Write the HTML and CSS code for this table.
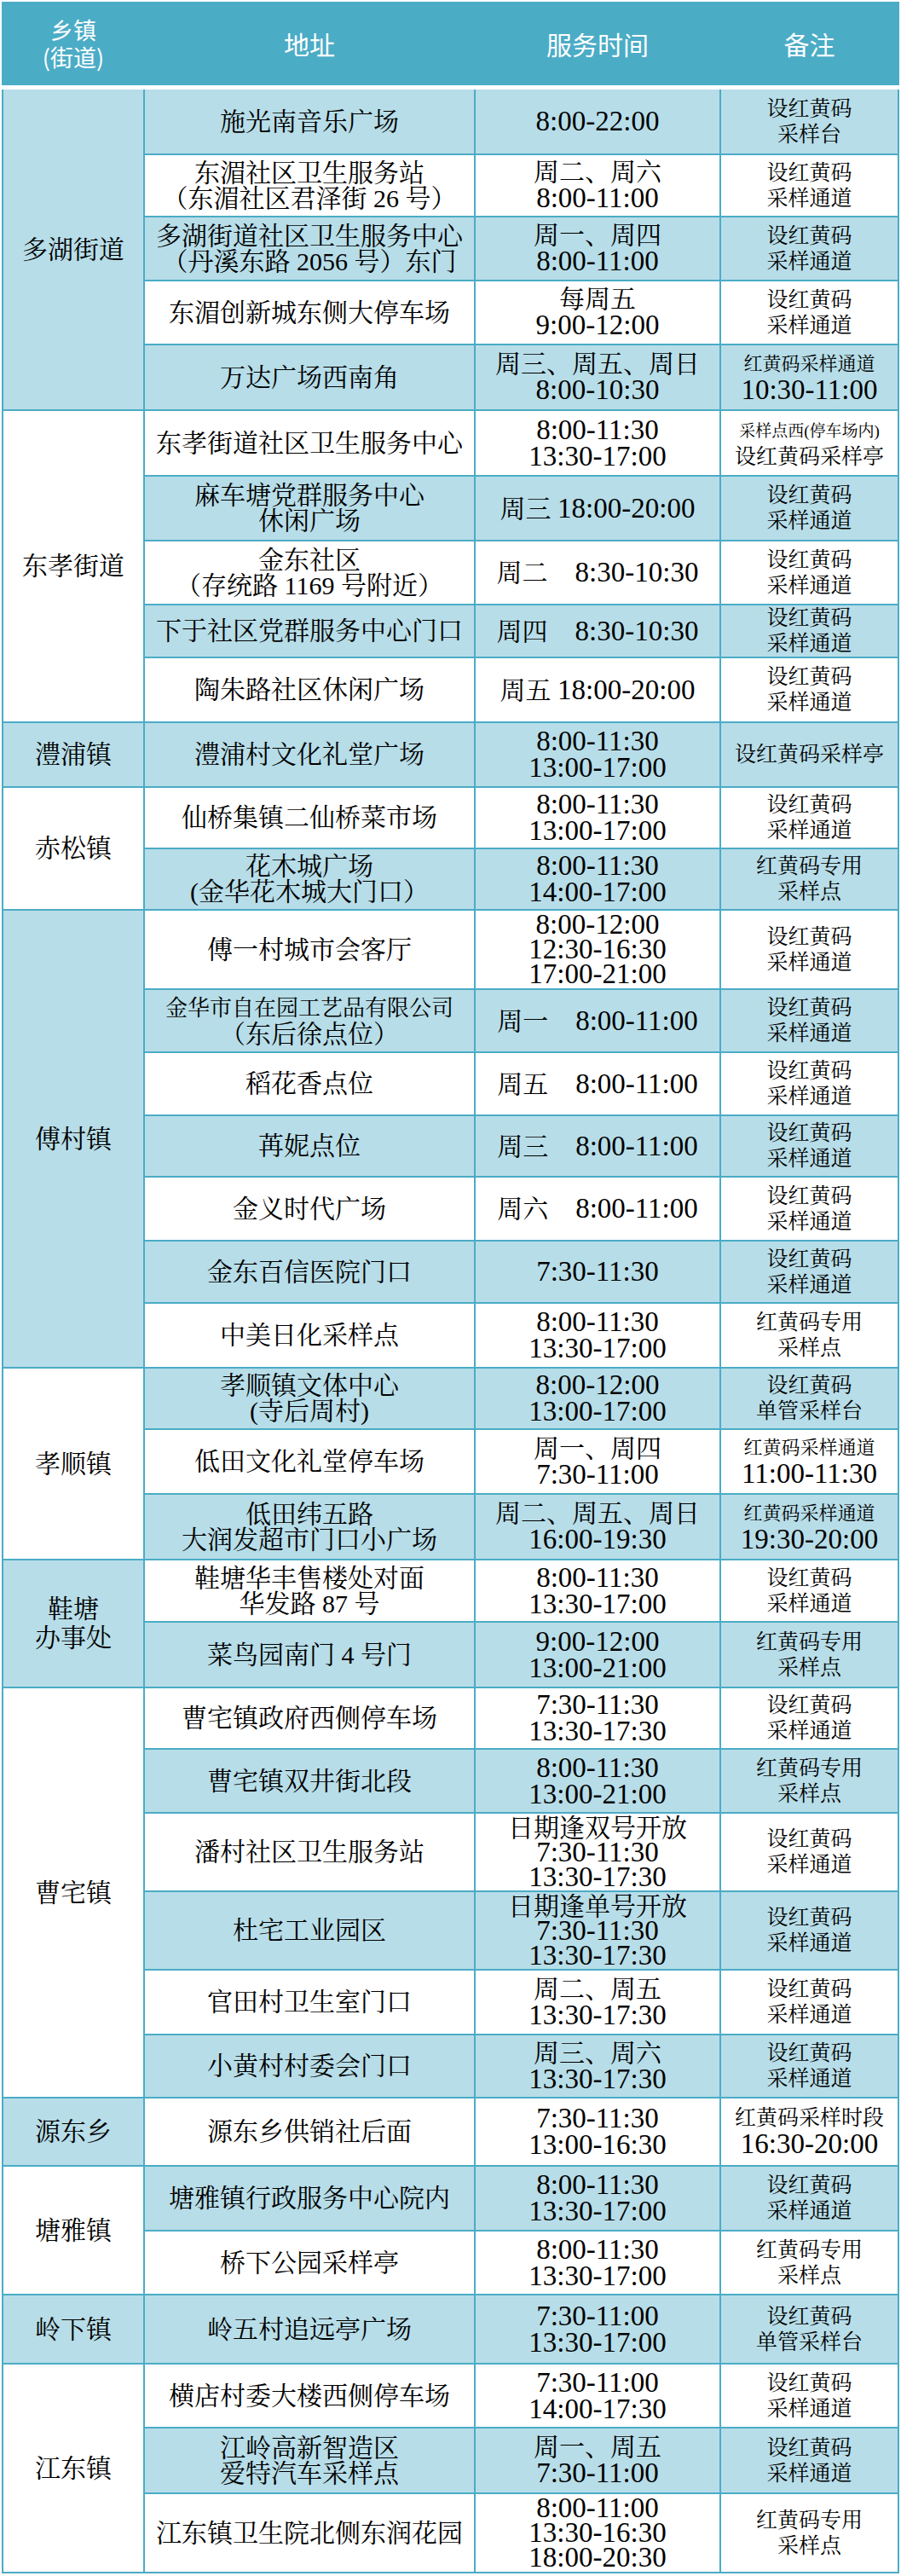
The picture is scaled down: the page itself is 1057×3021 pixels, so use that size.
FILE: index.html
```html
<!DOCTYPE html>
<html lang="zh-CN">
<head>
<meta charset="utf-8">
<title>核酸采样点</title>
<link rel="stylesheet" href="styles.css">
</head>
<body>
<div class="sheet">
  <div class="head">
    <div class="hc town"><p>乡镇<br>(街道)</p></div>
    <div class="hc"><p>地址</p></div>
    <div class="hc"><p>服务时间</p></div>
    <div class="hc"><p>备注</p></div>
  </div>
  <div class="grid">
    <!-- 多湖街道 -->
    <div class="c g b s5"><p>多湖街道</p></div>
    <div class="c a b"><p>施光南音乐广场</p></div>
    <div class="c t b"><p><span class="n">8:00-22:00</span></p></div>
    <div class="c m b"><p>设红黄码<br>采样台</p></div>

    <div class="c a w"><p>东湄社区卫生服务站<br>（东湄社区君泽街 26 号）</p></div>
    <div class="c t w"><p>周二、周六<br><span class="n">8:00-11:00</span></p></div>
    <div class="c m w"><p>设红黄码<br>采样通道</p></div>

    <div class="c a b"><p>多湖街道社区卫生服务中心<br>（丹溪东路 2056 号）东门</p></div>
    <div class="c t b"><p>周一、周四<br><span class="n">8:00-11:00</span></p></div>
    <div class="c m b"><p>设红黄码<br>采样通道</p></div>

    <div class="c a w"><p>东湄创新城东侧大停车场</p></div>
    <div class="c t w"><p>每周五<br><span class="n">9:00-12:00</span></p></div>
    <div class="c m w"><p>设红黄码<br>采样通道</p></div>

    <div class="c a b"><p>万达广场西南角</p></div>
    <div class="c t b"><p>周三、周五、周日<br><span class="n">8:00-10:30</span></p></div>
    <div class="c m b"><p><span class="sm">红黄码采样通道</span><br><span class="n">10:30-11:00</span></p></div>

    <!-- 东孝街道 -->
    <div class="c g w s5"><p>东孝街道</p></div>
    <div class="c a w"><p>东孝街道社区卫生服务中心</p></div>
    <div class="c t w"><p><span class="n">8:00-11:30</span><br><span class="n">13:30-17:00</span></p></div>
    <div class="c m w"><p><span class="xs">采样点西(停车场内)</span><br>设红黄码采样亭</p></div>

    <div class="c a b"><p>麻车塘党群服务中心<br>休闲广场</p></div>
    <div class="c t b"><p>周三 <span class="n">18:00-20:00</span></p></div>
    <div class="c m b"><p>设红黄码<br>采样通道</p></div>

    <div class="c a w"><p>金东社区<br>（存统路 1169 号附近）</p></div>
    <div class="c t w"><p>周二<span class="sp"></span><span class="n">8:30-10:30</span></p></div>
    <div class="c m w"><p>设红黄码<br>采样通道</p></div>

    <div class="c a b"><p>下于社区党群服务中心门口</p></div>
    <div class="c t b"><p>周四<span class="sp"></span><span class="n">8:30-10:30</span></p></div>
    <div class="c m b"><p>设红黄码<br>采样通道</p></div>

    <div class="c a w"><p>陶朱路社区休闲广场</p></div>
    <div class="c t w"><p>周五 <span class="n">18:00-20:00</span></p></div>
    <div class="c m w"><p>设红黄码<br>采样通道</p></div>

    <!-- 澧浦镇 -->
    <div class="c g b"><p>澧浦镇</p></div>
    <div class="c a b"><p>澧浦村文化礼堂广场</p></div>
    <div class="c t b"><p><span class="n">8:00-11:30</span><br><span class="n">13:00-17:00</span></p></div>
    <div class="c m b"><p>设红黄码采样亭</p></div>

    <!-- 赤松镇 -->
    <div class="c g w s2"><p>赤松镇</p></div>
    <div class="c a w"><p>仙桥集镇二仙桥菜市场</p></div>
    <div class="c t w"><p><span class="n">8:00-11:30</span><br><span class="n">13:00-17:00</span></p></div>
    <div class="c m w"><p>设红黄码<br>采样通道</p></div>

    <div class="c a b"><p>花木城广场<br>(金华花木城大门口）</p></div>
    <div class="c t b"><p><span class="n">8:00-11:30</span><br><span class="n">14:00-17:00</span></p></div>
    <div class="c m b"><p>红黄码专用<br>采样点</p></div>

    <!-- 傅村镇 -->
    <div class="c g b s7"><p>傅村镇</p></div>
    <div class="c a w"><p>傅一村城市会客厅</p></div>
    <div class="c t w three"><p><span class="n">8:00-12:00</span><br><span class="n">12:30-16:30</span><br><span class="n">17:00-21:00</span></p></div>
    <div class="c m w"><p>设红黄码<br>采样通道</p></div>

    <div class="c a b"><p><span class="nar">金华市自在园工艺品有限公司</span><br>（东后徐点位）</p></div>
    <div class="c t b"><p>周一<span class="sp"></span><span class="n">8:00-11:00</span></p></div>
    <div class="c m b"><p>设红黄码<br>采样通道</p></div>

    <div class="c a w"><p>稻花香点位</p></div>
    <div class="c t w"><p>周五<span class="sp"></span><span class="n">8:00-11:00</span></p></div>
    <div class="c m w"><p>设红黄码<br>采样通道</p></div>

    <div class="c a b"><p>苒妮点位</p></div>
    <div class="c t b"><p>周三<span class="sp"></span><span class="n">8:00-11:00</span></p></div>
    <div class="c m b"><p>设红黄码<br>采样通道</p></div>

    <div class="c a w"><p>金义时代广场</p></div>
    <div class="c t w"><p>周六<span class="sp"></span><span class="n">8:00-11:00</span></p></div>
    <div class="c m w"><p>设红黄码<br>采样通道</p></div>

    <div class="c a b"><p>金东百信医院门口</p></div>
    <div class="c t b"><p><span class="n">7:30-11:30</span></p></div>
    <div class="c m b"><p>设红黄码<br>采样通道</p></div>

    <div class="c a w"><p>中美日化采样点</p></div>
    <div class="c t w"><p><span class="n">8:00-11:30</span><br><span class="n">13:30-17:00</span></p></div>
    <div class="c m w"><p>红黄码专用<br>采样点</p></div>

    <!-- 孝顺镇 -->
    <div class="c g w s3"><p>孝顺镇</p></div>
    <div class="c a b"><p>孝顺镇文体中心<br>(寺后周村)</p></div>
    <div class="c t b"><p><span class="n">8:00-12:00</span><br><span class="n">13:00-17:00</span></p></div>
    <div class="c m b"><p>设红黄码<br>单管采样台</p></div>

    <div class="c a w"><p>低田文化礼堂停车场</p></div>
    <div class="c t w"><p>周一、周四<br><span class="n">7:30-11:00</span></p></div>
    <div class="c m w"><p><span class="sm">红黄码采样通道</span><br><span class="n">11:00-11:30</span></p></div>

    <div class="c a b"><p>低田纬五路<br>大润发超市门口小广场</p></div>
    <div class="c t b"><p>周二、周五、周日<br><span class="n">16:00-19:30</span></p></div>
    <div class="c m b"><p><span class="sm">红黄码采样通道</span><br><span class="n">19:30-20:00</span></p></div>

    <!-- 鞋塘办事处 -->
    <div class="c g b s2"><p>鞋塘<br>办事处</p></div>
    <div class="c a w"><p>鞋塘华丰售楼处对面<br>华发路 87 号</p></div>
    <div class="c t w"><p><span class="n">8:00-11:30</span><br><span class="n">13:30-17:00</span></p></div>
    <div class="c m w"><p>设红黄码<br>采样通道</p></div>

    <div class="c a b"><p>菜鸟园南门 4 号门</p></div>
    <div class="c t b"><p><span class="n">9:00-12:00</span><br><span class="n">13:00-21:00</span></p></div>
    <div class="c m b"><p>红黄码专用<br>采样点</p></div>

    <!-- 曹宅镇 -->
    <div class="c g w s6"><p>曹宅镇</p></div>
    <div class="c a w"><p>曹宅镇政府西侧停车场</p></div>
    <div class="c t w"><p><span class="n">7:30-11:30</span><br><span class="n">13:30-17:30</span></p></div>
    <div class="c m w"><p>设红黄码<br>采样通道</p></div>

    <div class="c a b"><p>曹宅镇双井街北段</p></div>
    <div class="c t b"><p><span class="n">8:00-11:30</span><br><span class="n">13:00-21:00</span></p></div>
    <div class="c m b"><p>红黄码专用<br>采样点</p></div>

    <div class="c a w"><p>潘村社区卫生服务站</p></div>
    <div class="c t w three"><p>日期逢双号开放<br><span class="n">7:30-11:30</span><br><span class="n">13:30-17:30</span></p></div>
    <div class="c m w"><p>设红黄码<br>采样通道</p></div>

    <div class="c a b"><p>杜宅工业园区</p></div>
    <div class="c t b three"><p>日期逢单号开放<br><span class="n">7:30-11:30</span><br><span class="n">13:30-17:30</span></p></div>
    <div class="c m b"><p>设红黄码<br>采样通道</p></div>

    <div class="c a w"><p>官田村卫生室门口</p></div>
    <div class="c t w"><p>周二、周五<br><span class="n">13:30-17:30</span></p></div>
    <div class="c m w"><p>设红黄码<br>采样通道</p></div>

    <div class="c a b"><p>小黄村村委会门口</p></div>
    <div class="c t b"><p>周三、周六<br><span class="n">13:30-17:30</span></p></div>
    <div class="c m b"><p>设红黄码<br>采样通道</p></div>

    <!-- 源东乡 -->
    <div class="c g b"><p>源东乡</p></div>
    <div class="c a w"><p>源东乡供销社后面</p></div>
    <div class="c t w"><p><span class="n">7:30-11:30</span><br><span class="n">13:00-16:30</span></p></div>
    <div class="c m w"><p>红黄码采样时段<br><span class="n">16:30-20:00</span></p></div>

    <!-- 塘雅镇 -->
    <div class="c g w s2"><p>塘雅镇</p></div>
    <div class="c a b"><p>塘雅镇行政服务中心院内</p></div>
    <div class="c t b"><p><span class="n">8:00-11:30</span><br><span class="n">13:30-17:00</span></p></div>
    <div class="c m b"><p>设红黄码<br>采样通道</p></div>

    <div class="c a w"><p>桥下公园采样亭</p></div>
    <div class="c t w"><p><span class="n">8:00-11:30</span><br><span class="n">13:30-17:00</span></p></div>
    <div class="c m w"><p>红黄码专用<br>采样点</p></div>

    <!-- 岭下镇 -->
    <div class="c g b"><p>岭下镇</p></div>
    <div class="c a b"><p>岭五村追远亭广场</p></div>
    <div class="c t b"><p><span class="n">7:30-11:00</span><br><span class="n">13:30-17:00</span></p></div>
    <div class="c m b"><p>设红黄码<br>单管采样台</p></div>

    <!-- 江东镇 -->
    <div class="c g w s3"><p>江东镇</p></div>
    <div class="c a w"><p>横店村委大楼西侧停车场</p></div>
    <div class="c t w"><p><span class="n">7:30-11:00</span><br><span class="n">14:00-17:30</span></p></div>
    <div class="c m w"><p>设红黄码<br>采样通道</p></div>

    <div class="c a b"><p>江岭高新智造区<br>爱特汽车采样点</p></div>
    <div class="c t b"><p>周一、周五<br><span class="n">7:30-11:00</span></p></div>
    <div class="c m b"><p>设红黄码<br>采样通道</p></div>

    <div class="c a w"><p>江东镇卫生院北侧东润花园</p></div>
    <div class="c t w three"><p><span class="n">8:00-11:00</span><br><span class="n">13:30-16:30</span><br><span class="n">18:00-20:30</span></p></div>
    <div class="c m w"><p>红黄码专用<br>采样点</p></div>
  </div>
</div>
</body>
</html>
```

FILE: styles.css
```css
html, body {
  margin: 0;
  padding: 0;
  background: #ffffff;
}

p {
  margin: 0;
}

.sheet {
  margin: 2px 0 0 2px;
  width: 1053px;
}

.head {
  display: grid;
  grid-template-columns: 164px 386px 286px 207px;
  column-gap: 2px;
  padding: 0 2px;
  height: 98px;
  background: #4bacc6;
  color: #ffffff;
  font-family: "Noto Sans CJK SC", "Noto Sans", sans-serif;
  font-size: 30px;
  line-height: 34px;
}

.hc {
  display: flex;
  align-items: center;
  justify-content: center;
  text-align: center;
}

.hc.town {
  font-size: 27px;
  line-height: 32px;
}

.grid {
  margin-top: 5px;
  display: grid;
  grid-template-columns: 164px 386px 286px 207px;
  grid-template-rows:
    75px 71px 73px 73px 75px
    75px 74px 73px 60px 74px
    74px
    70px 70px
    91px 72px 72px 70px 73px 71px 74px
    70px 74px 75px
    71px 75px
    70px 73px 90px 90px 74px 72px
    78px
    74px 73px
    79px
    73px 75px 91px;
  gap: 2px;
  padding: 0 2px 2px 2px;
  background: #4bacc6;
  font-family: "Liberation Serif", "Noto Serif CJK SC", "Noto Sans CJK SC", serif;
  color: #000000;
}

.c {
  display: flex;
  align-items: center;
  justify-content: center;
  text-align: center;
  font-size: 30px;
  line-height: 30px;
  white-space: nowrap;
}

.b { background: #b7dde8; }
.w { background: #ffffff; }

.s2 { grid-row: span 2; }
.s3 { grid-row: span 3; }
.s5 { grid-row: span 5; }
.s6 { grid-row: span 6; }
.s7 { grid-row: span 7; }

.g {
  font-size: 30px;
  line-height: 34px;
}

.t {
  line-height: 30px;
}

.t.three {
  line-height: 29px;
}

.m {
  font-size: 25px;
  line-height: 30px;
}

.n {
  font-size: 33px;
}

.sp {
  display: inline-block;
  width: 32px;
}

.sm {
  font-size: 22px;
}

.xs {
  font-size: 19px;
}

.nar {
  font-size: 26px;
}
```
